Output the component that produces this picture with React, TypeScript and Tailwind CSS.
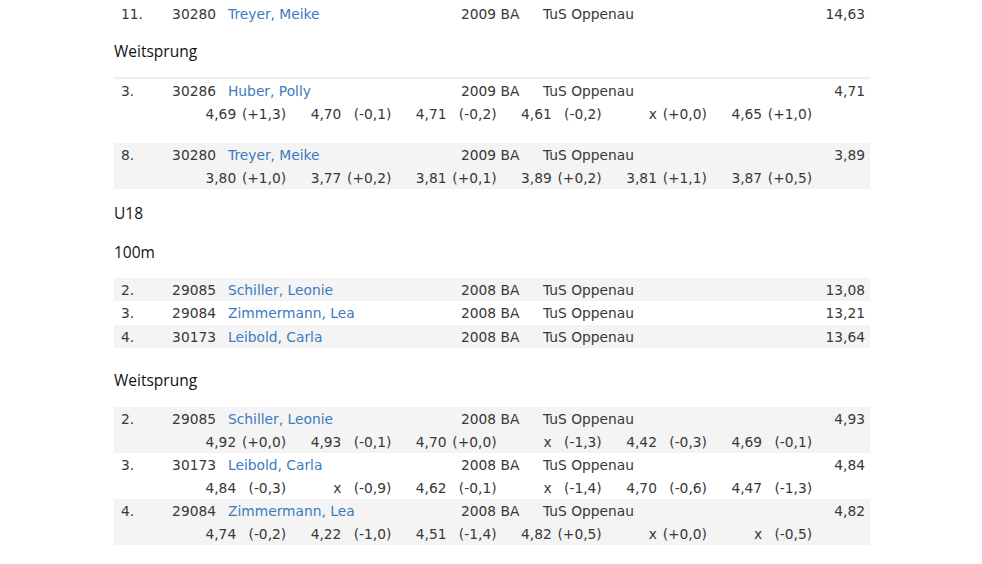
import React from 'react';

type Attempt = [string, string];

type Result = {
  rank: string;
  id: string;
  name: string;
  year: string;
  club: string;
  result: string;
  attempts?: Attempt[];
};

function AttemptCell({ perf, wind }: { perf: string; wind: string }) {
  return (
    <div className="w-[105.2px] flex justify-end items-center gap-[3px]">
      <span>{perf}</span>
      <span className="w-[47px] text-right">({wind})</span>
    </div>
  );
}

function ResultRow({ r, striped }: { r: Result; striped?: boolean }) {
  return (
    <div className={striped ? 'bg-[#f4f4f4]' : 'bg-white'}>
      <div className="h-[23.4px] flex items-center pt-[1px] pl-[7px] pr-[5px]">
        <div className="w-[40px]">{r.rank}</div>
        <div className="w-[55px] text-right">{r.id}</div>
        <div className="w-[245px] pl-[12px]">
          <a className="text-[#3b7bbf]">{r.name}</a>
        </div>
        <div className="w-[82px]">{r.year}</div>
        <div className="flex-1">{r.club}</div>
        <div className="text-right">{r.result}</div>
      </div>
      {r.attempts && (
        <div className="h-[22.6px] flex items-center pt-[1px] pl-[67px]">
          {r.attempts.map((a, i) => (
            <AttemptCell key={i} perf={a[0]} wind={a[1]} />
          ))}
        </div>
      )}
    </div>
  );
}

function Heading({ children, className }: { children: React.ReactNode; className: string }) {
  return (
    <div
      className={`flex items-center text-[15.5px] text-[#111] font-['Open_Sans',sans-serif] ${className}`}
    >
      {children}
    </div>
  );
}

const u16Weit: Result[] = [
  {
    rank: '3.', id: '30286', name: 'Huber, Polly', year: '2009 BA', club: 'TuS Oppenau', result: '4,71',
    attempts: [['4,69', '+1,3'], ['4,70', '-0,1'], ['4,71', '-0,2'], ['4,61', '-0,2'], ['x', '+0,0'], ['4,65', '+1,0']],
  },
  {
    rank: '8.', id: '30280', name: 'Treyer, Meike', year: '2009 BA', club: 'TuS Oppenau', result: '3,89',
    attempts: [['3,80', '+1,0'], ['3,77', '+0,2'], ['3,81', '+0,1'], ['3,89', '+0,2'], ['3,81', '+1,1'], ['3,87', '+0,5']],
  },
];

const u18Sprint: Result[] = [
  { rank: '2.', id: '29085', name: 'Schiller, Leonie', year: '2008 BA', club: 'TuS Oppenau', result: '13,08' },
  { rank: '3.', id: '29084', name: 'Zimmermann, Lea', year: '2008 BA', club: 'TuS Oppenau', result: '13,21' },
  { rank: '4.', id: '30173', name: 'Leibold, Carla', year: '2008 BA', club: 'TuS Oppenau', result: '13,64' },
];

const u18Weit: Result[] = [
  {
    rank: '2.', id: '29085', name: 'Schiller, Leonie', year: '2008 BA', club: 'TuS Oppenau', result: '4,93',
    attempts: [['4,92', '+0,0'], ['4,93', '-0,1'], ['4,70', '+0,0'], ['x', '-1,3'], ['4,42', '-0,3'], ['4,69', '-0,1']],
  },
  {
    rank: '3.', id: '30173', name: 'Leibold, Carla', year: '2008 BA', club: 'TuS Oppenau', result: '4,84',
    attempts: [['4,84', '-0,3'], ['x', '-0,9'], ['4,62', '-0,1'], ['x', '-1,4'], ['4,70', '-0,6'], ['4,47', '-1,3']],
  },
  {
    rank: '4.', id: '29084', name: 'Zimmermann, Lea', year: '2008 BA', club: 'TuS Oppenau', result: '4,82',
    attempts: [['4,74', '-0,2'], ['4,22', '-1,0'], ['4,51', '-1,4'], ['4,82', '+0,5'], ['x', '+0,0'], ['x', '-0,5']],
  },
];

export default function App() {
  return (
    <div className="w-[982px] h-[564px] overflow-hidden bg-white">
      <div className="w-[756px] ml-[114px] pt-[2px] text-[13.8px] text-[#383838] font-['DejaVu_Sans',Verdana,sans-serif]">
        <ResultRow
          r={{ rank: '11.', id: '30280', name: 'Treyer, Meike', year: '2009 BA', club: 'TuS Oppenau', result: '14,63' }}
        />

        <Heading className="h-[51.6px] pt-[1px]">Weitsprung</Heading>
        <div className="border-t-2 border-[#eeeeee]">
          <ResultRow r={u16Weit[0]} />
          <div className="h-[18px]" />
          <ResultRow r={u16Weit[1]} striped />
        </div>

        <Heading className="mt-[5px] h-[39px]">U18</Heading>
        <Heading className="h-[39px] mb-[6px]">100m</Heading>
        <div>
          {u18Sprint.map((r, i) => (
            <ResultRow key={r.id} r={r} striped={i % 2 === 0} />
          ))}
        </div>

        <Heading className="h-[59px] pt-[6px]">Weitsprung</Heading>
        <div>
          {u18Weit.map((r, i) => (
            <ResultRow key={r.id} r={r} striped={i % 2 === 0} />
          ))}
        </div>
      </div>
    </div>
  );
}
